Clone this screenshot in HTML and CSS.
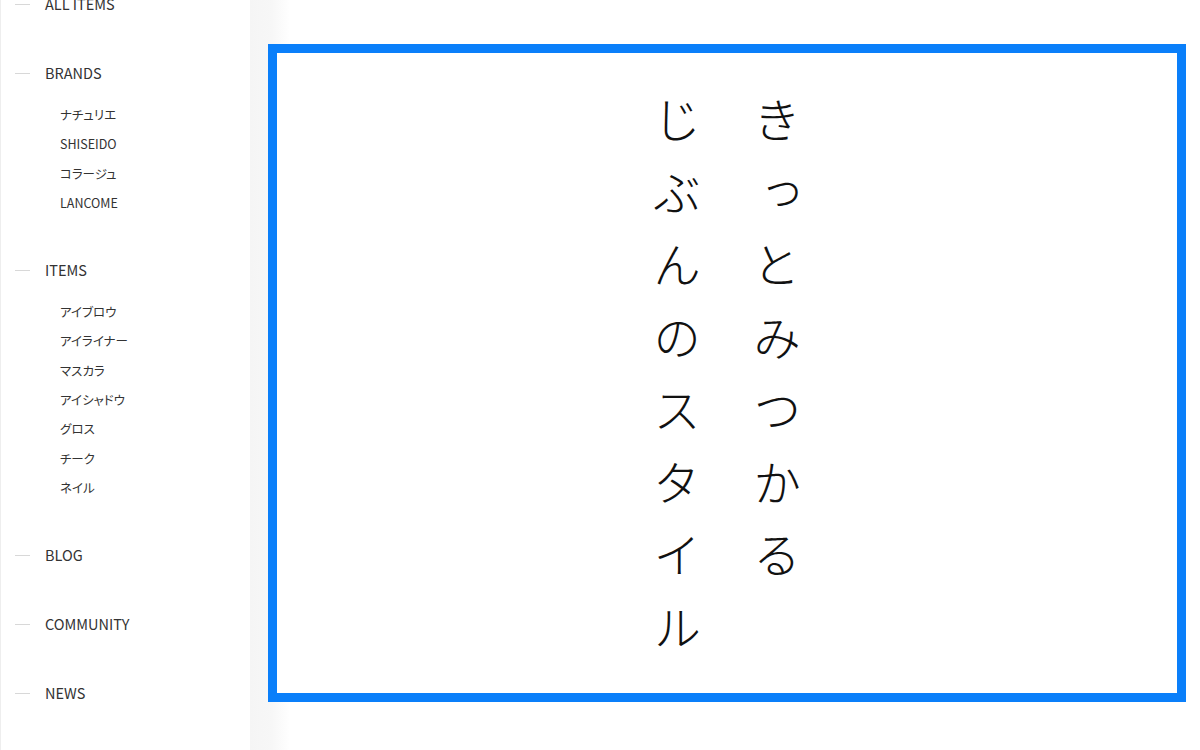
FILE: index.html
```html
<!DOCTYPE html>
<html lang="ja">
<head>
<meta charset="utf-8">
<title>きっとみつかる じぶんのスタイル</title>
<link rel="stylesheet" href="styles.css">
</head>
<body>
<div class="page">
  <nav class="sidebar">
    <ul class="nav">
      <li class="cat"><span class="cat-label">ALL ITEMS</span></li>
      <li class="cat">
        <span class="cat-label">BRANDS</span>
        <ul class="sub">
          <li>ナチュリエ</li>
          <li>SHISEIDO</li>
          <li>コラージュ</li>
          <li>LANCOME</li>
        </ul>
      </li>
      <li class="cat">
        <span class="cat-label">ITEMS</span>
        <ul class="sub">
          <li>アイブロウ</li>
          <li>アイライナー</li>
          <li>マスカラ</li>
          <li>アイシャドウ</li>
          <li>グロス</li>
          <li>チーク</li>
          <li>ネイル</li>
        </ul>
      </li>
      <li class="cat"><span class="cat-label">BLOG</span></li>
      <li class="cat"><span class="cat-label">COMMUNITY</span></li>
      <li class="cat"><span class="cat-label">NEWS</span></li>
    </ul>
  </nav>
  <main class="main">
    <section class="hero">
      <p class="catch"><span class="line">きっとみつかる</span><span class="line">じぶんのスタイル</span></p>
    </section>
  </main>
</div>
</body>
</html>
```

FILE: styles.css
```css
html, body {
  margin: 0;
  padding: 0;
  background: #ffffff;
}

body {
  font-family: "Noto Sans CJK JP", "Noto Sans", sans-serif;
  color: #333333;
}

.page {
  display: flex;
  height: 750px;
  overflow: hidden;
}

.sidebar {
  width: 250px;
  flex: 0 0 250px;
  background: #ffffff;
  border-left: 1px solid #eeeeee;
  box-sizing: border-box;
}

.nav {
  list-style: none;
  margin: -8px 0 0 0;
  padding: 0;
}

.cat {
  padding-bottom: 45px;
}

.cat-label {
  display: flex;
  align-items: center;
  height: 24px;
  font-size: 14.5px;
  line-height: 24px;
  color: #333333;
  padding-left: 14px;
}

.cat-label::before {
  content: "";
  width: 15px;
  height: 1px;
  background: #d8d8d8;
  margin-right: 15px;
}

.sub {
  list-style: none;
  margin: 15px 0 -4px 0;
  padding: 0 0 0 59px;
}

.sub li {
  font-size: 12.5px;
  line-height: 29.3px;
  height: 29.3px;
  color: #333333;
  font-feature-settings: "palt";
}

.main {
  flex: 1;
  background: linear-gradient(to right, #f5f5f5 0px, #f7f7f7 22px, #ffffff 40px);
  padding: 44px 14px 48px 18px;
  box-sizing: border-box;
  display: flex;
}

.hero {
  flex: 1;
  background: #ffffff;
  border: 9px solid #0a7ffa;
  display: flex;
  align-items: center;
  justify-content: center;
}

.catch {
  margin: 26px 0 0 0;
  writing-mode: vertical-rl;
  font-size: 48px;
  font-weight: 300;
  line-height: 100px;
  letter-spacing: 24.5px;
  color: #111111;
}

.line {
  display: block;
}
```
